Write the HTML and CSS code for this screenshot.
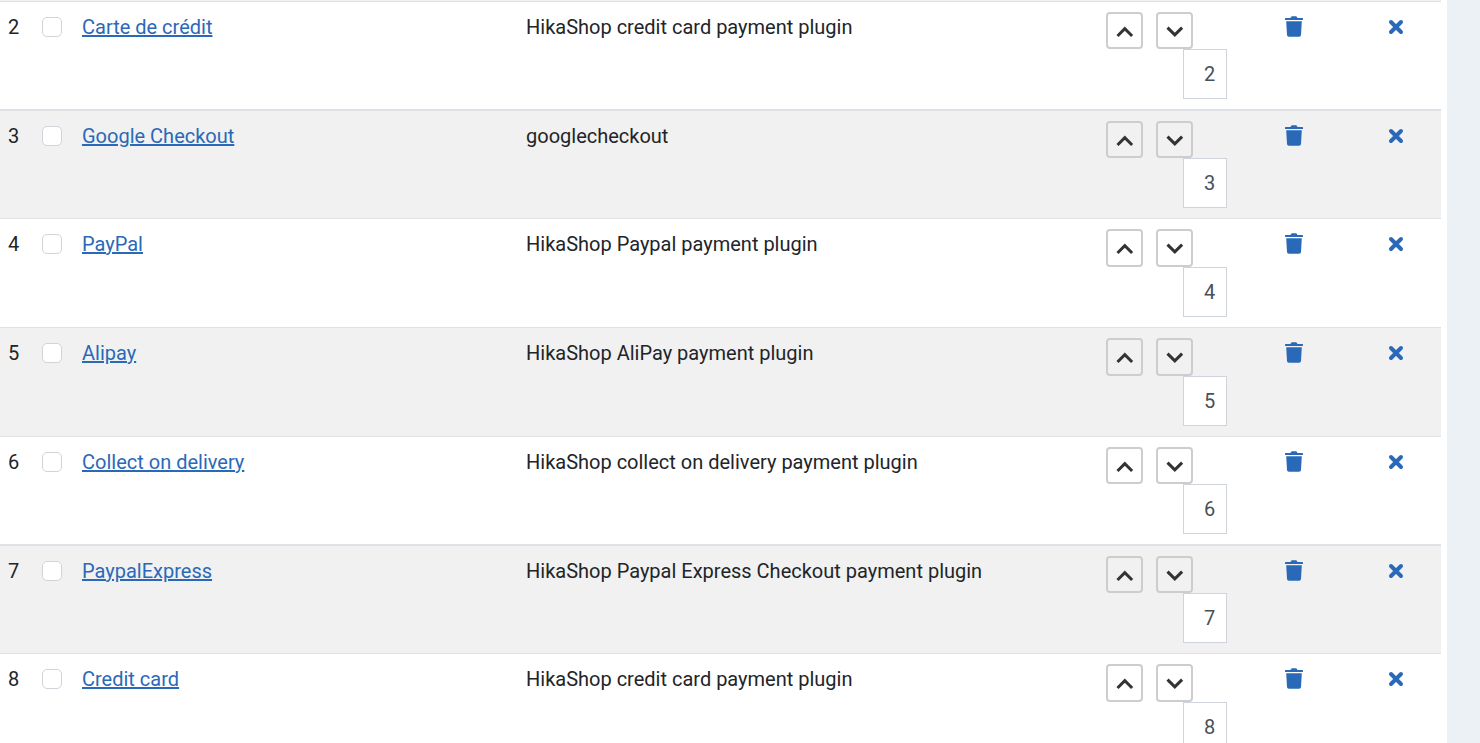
FILE: index.html
```html
<!DOCTYPE html>
<html lang="en">
<head>
    <meta charset="UTF-8">
    <meta name="viewport" content="width=device-width, initial-scale=1.0">
    <title>Payment methods</title>
    <link rel="stylesheet" href="styles.css">
</head>
<body>
    <svg class="sprite" aria-hidden="true">
        <symbol id="up" viewBox="0 0 18 12"><path d="M1.5 10 L8.8 2.7 L16.1 10"/></symbol>
        <symbol id="down" viewBox="0 0 18 12"><path d="M1.5 1.6 L8.8 8.9 L16.1 1.6"/></symbol>
        <symbol id="trash" viewBox="0 0 18 21">
            <path d="M0.6 2 H5.4 L6.2 0.8 Q6.5 0.3 7 0.3 H11 Q11.5 0.3 11.8 0.8 L12.6 2 H17.4 Q18 2 18 2.6 V3.4 Q18 4 17.4 4 H0.6 Q0 4 0 3.4 V2.6 Q0 2 0.6 2 Z"/>
            <path d="M1.2 5.2 H16.8 L16 18.9 Q15.9 20.7 14.1 20.7 H3.9 Q2.1 20.7 2 18.9 Z"/>
        </symbol>
        <symbol id="cross" viewBox="0 0 16 16"><path d="M3 3 L13 13 M13 3 L3 13"/></symbol>
    </svg>

    <main class="panel">
        <table class="plugins">
            <colgroup>
                <col class="col-num">
                <col class="col-check">
                <col class="col-name">
                <col class="col-desc">
                <col class="col-order">
                <col class="col-delete">
                <col class="col-enabled">
            </colgroup>
            <tbody id="pluginRows"></tbody>
        </table>
    </main>

    <script>
        const plugins = [
            { num: 2, name: 'Carte de crédit', desc: 'HikaShop credit card payment plugin' },
            { num: 3, name: 'Google Checkout', desc: 'googlecheckout' },
            { num: 4, name: 'PayPal', desc: 'HikaShop Paypal payment plugin' },
            { num: 5, name: 'Alipay', desc: 'HikaShop AliPay payment plugin' },
            { num: 6, name: 'Collect on delivery', desc: 'HikaShop collect on delivery payment plugin' },
            { num: 7, name: 'PaypalExpress', desc: 'HikaShop Paypal Express Checkout payment plugin' },
            { num: 8, name: 'Credit card', desc: 'HikaShop credit card payment plugin' }
        ];

        document.getElementById('pluginRows').innerHTML = plugins.map(p => `
            <tr>
                <td>${p.num}</td>
                <td class="check"><input type="checkbox" aria-label="Select ${p.name}"></td>
                <td><a href="#">${p.name}</a></td>
                <td>${p.desc}</td>
                <td>
                    <div class="order">
                        <div class="arrows">
                            <button type="button" aria-label="Move up"><svg><use href="#up"/></svg></button>
                            <button type="button" aria-label="Move down"><svg><use href="#down"/></svg></button>
                        </div>
                        <input type="text" value="${p.num}" aria-label="Order of ${p.name}">
                    </div>
                </td>
                <td class="action"><a href="#" aria-label="Delete"><svg class="trash"><use href="#trash"/></svg></a></td>
                <td class="action"><a href="#" aria-label="Enable"><svg class="cross"><use href="#cross"/></svg></a></td>
            </tr>`).join('');
    </script>
</body>
</html>
```
FILE: styles.css
```css
* {
    box-sizing: border-box;
}

body {
    margin: 0;
    padding-right: 33px;
    background: #ebf1f5;
    color: #212529;
    font-family: Roboto, "Liberation Sans", sans-serif;
    font-size: 20px;
    line-height: 30px;
}

.sprite {
    display: none;
}

.panel {
    min-height: 100vh;
    padding-right: 6px;
    background: #fff;
}

.plugins {
    width: 100%;
    table-layout: fixed;
    border-spacing: 0;
    border-top: 1px solid #f1f1f1;
}

.col-num { width: 34px; }
.col-check { width: 40px; }
.col-name { width: 444px; }
.col-order { width: 139px; }
.col-delete { width: 114px; }
.col-enabled { width: 90px; }

.plugins td {
    padding: 10px 8px;
    border-top: 1px solid #dee2e6;
    vertical-align: top;
}

.plugins tr:nth-child(even) td {
    background: #f1f1f1;
}

.plugins tr:nth-child(4n+2) td {
    border-top-width: 2px;
}

a {
    color: #2a69b8;
    text-decoration: underline;
}

.check input {
    appearance: none;
    display: block;
    width: 20px;
    height: 20px;
    margin: 5px 0 0;
    border: 1px solid #ced4da;
    border-radius: 5px;
    background: #fff;
}

.check input:checked {
    background: #2a69b8;
}

.order {
    display: flex;
    flex-direction: column;
    padding-right: 2px;
}

.arrows {
    display: flex;
    gap: 13px;
}

.arrows button {
    display: flex;
    align-items: center;
    justify-content: center;
    width: 37px;
    height: 37px;
    padding: 2px 0 0;
    border: 2px solid #cdcdcd;
    border-radius: 4px;
    background: transparent;
    cursor: pointer;
}

.plugins tr:nth-child(4n+3) button,
.plugins tr:nth-child(4n+4) button {
    height: 38px;
}

.arrows svg {
    width: 18px;
    height: 12px;
    fill: none;
    stroke: #333;
    stroke-width: 3;
}

.order input {
    align-self: flex-end;
    width: 44px;
    height: 50px;
    padding: 0 0 0 20px;
    border: 1px solid #ced4da;
    border-radius: 0;
    background: #fff;
    color: #495057;
    font: inherit;
}

.action a {
    display: flex;
    align-items: center;
    justify-content: center;
    height: 29px;
}

.trash {
    width: 18px;
    height: 21px;
    fill: #2a69b8;
}

.cross {
    width: 16px;
    height: 16px;
    fill: none;
    stroke: #2a69b8;
    stroke-width: 4;
    stroke-linecap: round;
}
```
